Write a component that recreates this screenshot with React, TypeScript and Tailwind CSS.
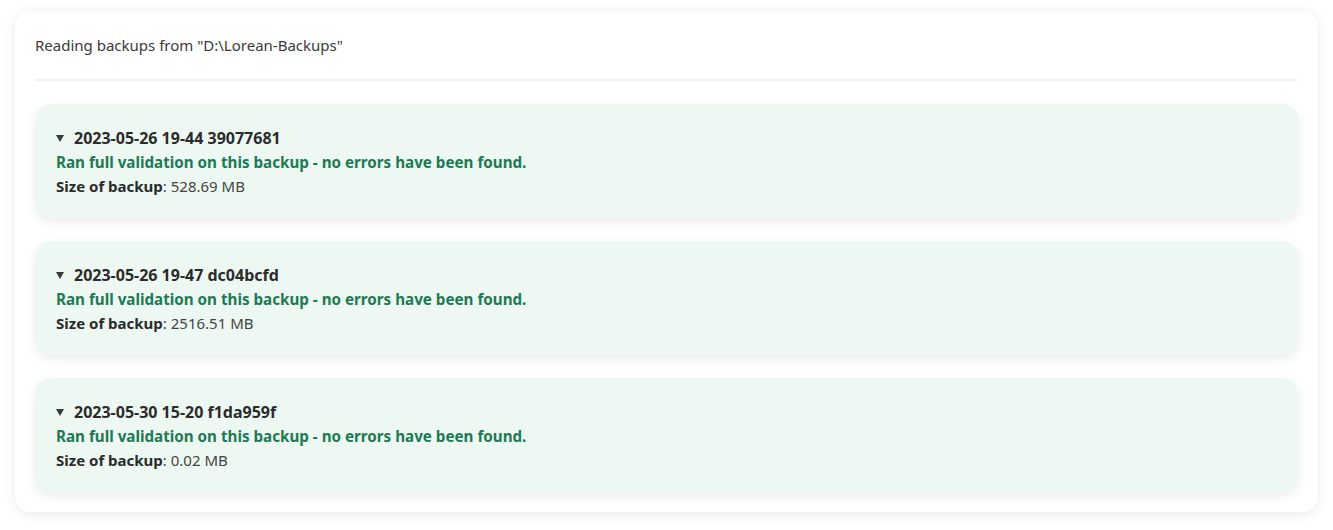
import React from 'react';

interface Backup {
  name: string;
  size: string;
}

const backups: Backup[] = [
  { name: '2023-05-26 19-44 39077681', size: '528.69 MB' },
  { name: '2023-05-26 19-47 dc04bcfd', size: '2516.51 MB' },
  { name: '2023-05-30 15-20 f1da959f', size: '0.02 MB' },
];

const BackupCard: React.FC<{ backup: Backup }> = ({ backup }) => (
  <div className="rounded-2xl bg-[#eef8f2] pl-[21px] pr-5 pt-[22px] pb-[20px] shadow-[0_4px_12px_rgba(0,0,0,0.08)]">
    <div className="flex items-center font-bold text-[16px] leading-6 text-[#2b2b2b]">
      <svg viewBox="0 0 8 8" className="mr-[10px] h-[8px] w-[8px] fill-[#3a3a3a]" aria-hidden="true">
        <path d="M0 1 L8 1 L4 8 Z" />
      </svg>
      <span>{backup.name}</span>
    </div>
    <p className="font-bold text-[15.2px] leading-6 text-[#1c7a55]">
      Ran full validation on this backup - no errors have been found.
    </p>
    <p className="text-[15px] leading-6 text-[#444]">
      <span className="font-bold text-[#2b2b2b]">Size of backup</span>: {backup.size}
    </p>
  </div>
);

export default function App() {
  return (
    <div className="min-h-[530px] bg-white p-[11px_15px] font-['Noto_Sans',sans-serif]">
      <div className="rounded-2xl bg-white px-5 pt-[22px] pb-5 shadow-[0_2px_14px_rgba(0,0,0,0.09)]">
        <p className="text-[15px] leading-6 text-[#3a3a3a]">Reading backups from "D:\Lorean-Backups"</p>
        <div className="mt-[22px] mb-[23px] h-[2px] bg-[#f1f1f1]" />
        <div className="flex flex-col gap-[23px]">
          {backups.map((b) => (
            <BackupCard key={b.name} backup={b} />
          ))}
        </div>
      </div>
    </div>
  );
}
